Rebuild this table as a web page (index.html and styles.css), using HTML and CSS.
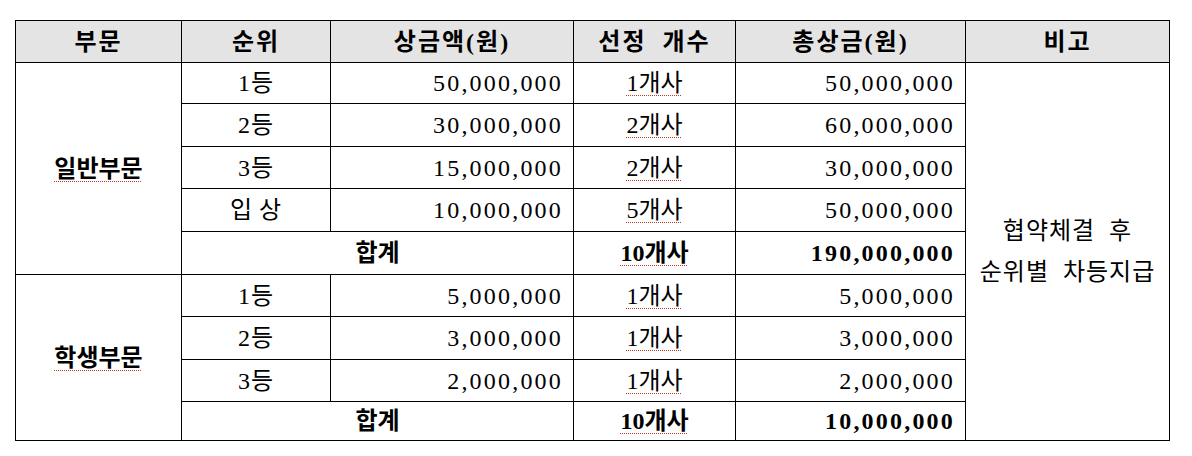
FILE: index.html
```html
<!DOCTYPE html>
<html lang="ko">
<head>
<meta charset="utf-8">
<title>상금 내역</title>
<link rel="stylesheet" href="styles.css">
</head>
<body>
<table class="prize">
  <colgroup>
    <col class="c1"><col class="c2"><col class="c3"><col class="c4"><col class="c5"><col class="c6">
  </colgroup>
  <thead>
    <tr class="head">
      <th>부문</th><th>순위</th><th>상금액(원)</th><th>선정&nbsp;&nbsp;개수</th><th>총상금(원)</th><th>비고</th>
    </tr>
  </thead>
  <tbody>
    <tr class="r41">
      <td class="group" rowspan="5"><span class="mark">일반부문</span></td>
      <td class="rank">1등</td><td class="num">50,000,000</td><td class="cnt"><span class="mark">1개사</span></td><td class="num">50,000,000</td>
      <td class="note" rowspan="9">협약체결&nbsp; 후<br>순위별&nbsp; 차등지급</td>
    </tr>
    <tr class="r43"><td class="rank">2등</td><td class="num">30,000,000</td><td class="cnt"><span class="mark">2개사</span></td><td class="num">60,000,000</td></tr>
    <tr class="r42"><td class="rank">3등</td><td class="num">15,000,000</td><td class="cnt"><span class="mark">2개사</span></td><td class="num">30,000,000</td></tr>
    <tr class="r43"><td class="rank">입&thinsp;상</td><td class="num">10,000,000</td><td class="cnt"><span class="mark">5개사</span></td><td class="num">50,000,000</td></tr>
    <tr class="r43 total"><td class="sum" colspan="2">합계</td><td class="cnt"><span class="mark">10개사</span></td><td class="num">190,000,000</td></tr>
    <tr class="r42">
      <td class="group" rowspan="4"><span class="mark">학생부문</span></td>
      <td class="rank">1등</td><td class="num">5,000,000</td><td class="cnt"><span class="mark">1개사</span></td><td class="num">5,000,000</td>
    </tr>
    <tr class="r43"><td class="rank">2등</td><td class="num">3,000,000</td><td class="cnt"><span class="mark">1개사</span></td><td class="num">3,000,000</td></tr>
    <tr class="r42"><td class="rank">3등</td><td class="num">2,000,000</td><td class="cnt"><span class="mark">1개사</span></td><td class="num">2,000,000</td></tr>
    <tr class="r39 total"><td class="sum" colspan="2">합계</td><td class="cnt"><span class="mark">10개사</span></td><td class="num">10,000,000</td></tr>
  </tbody>
</table>
</body>
</html>
```
FILE: styles.css
```css
html, body {
  margin: 0;
  padding: 0;
  background: #ffffff;
}

body {
  padding: 20px 0 0 15px;
  font-family: "Liberation Serif", "Noto Sans CJK KR", serif;
  font-size: 24px;
  color: #000;
}

.prize {
  border-collapse: collapse;
  table-layout: fixed;
  width: 1154px;
}

.c1 { width: 166px; }
.c2 { width: 149px; }
.c3 { width: 243px; }
.c4 { width: 162px; }
.c5 { width: 230px; }
.c6 { width: 204px; }

.prize th,
.prize td {
  border: 1px solid #000;
  padding: 0;
  line-height: 1;
  vertical-align: middle;
  text-align: center;
}

.head { height: 42px; }
.prize .head th {
  background: #e4e4e4;
  font-weight: 700;
  letter-spacing: 2px;
}

.r39 { height: 39px; }
.r41 { height: 41px; }
.r42 { height: 42px; }
.r43 { height: 43px; }

.prize td.num {
  text-align: right;
  letter-spacing: 2.2px;
  padding-right: 10px;
}

.prize .total td { font-weight: 700; }

.prize td.group { font-weight: 700; }

.prize td.rank { letter-spacing: 1px; }

.prize td.note {
  line-height: 41px;
  letter-spacing: 1px;
}

.mark {
  text-decoration: underline dotted #c0392b;
  text-decoration-thickness: 1px;
  text-underline-offset: 4px;
}
```
